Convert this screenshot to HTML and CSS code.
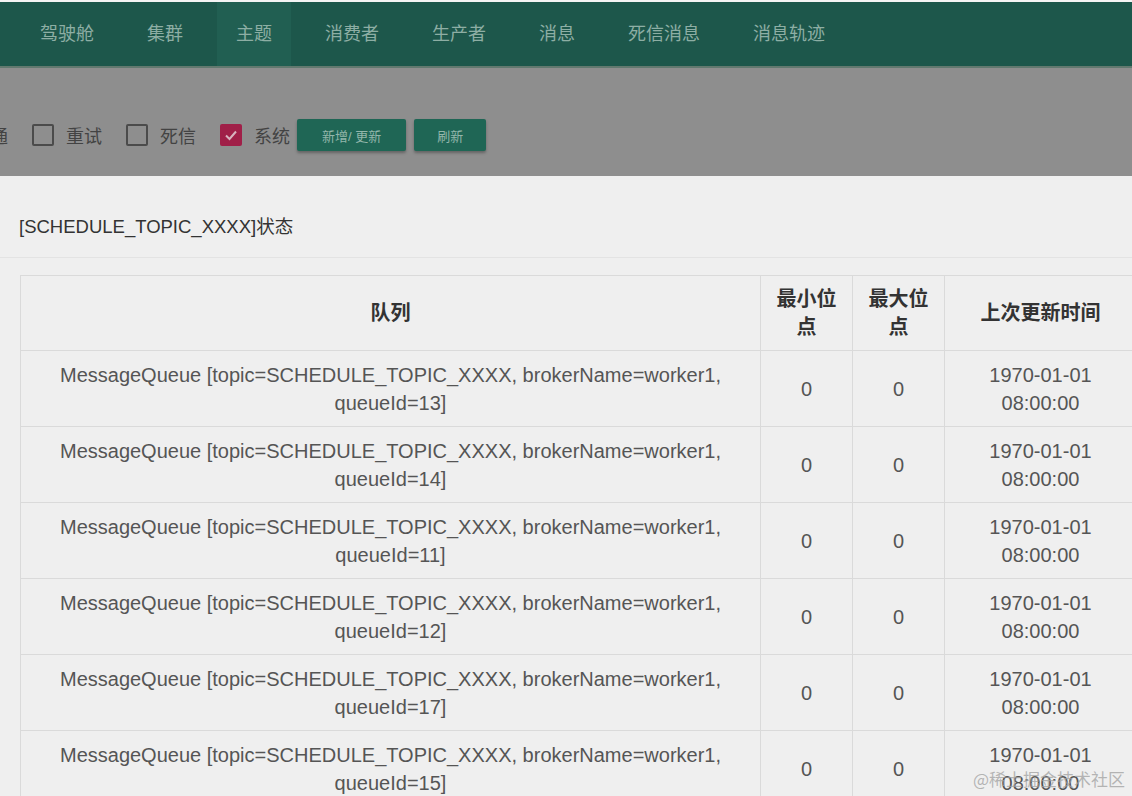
FILE: index.html
```html
<!DOCTYPE html>
<html lang="zh-CN">
<head>
    <meta charset="UTF-8">
    <meta name="viewport" content="width=device-width, initial-scale=1.0">
    <title>主题 - 队列状态</title>
    <link rel="stylesheet" href="styles.css">
</head>
<body>

    <nav class="navbar">
        <a class="nav-item" href="#">驾驶舱</a>
        <a class="nav-item" href="#">集群</a>
        <a class="nav-item active" href="#">主题</a>
        <a class="nav-item" href="#">消费者</a>
        <a class="nav-item" href="#">生产者</a>
        <a class="nav-item" href="#">消息</a>
        <a class="nav-item" href="#">死信消息</a>
        <a class="nav-item" href="#">消息轨迹</a>
    </nav>

    <div class="backdrop">
        <div class="filter-row">
            <label class="check"><span class="box"></span>普通</label>
            <label class="check"><span class="box"></span>重试</label>
            <label class="check"><span class="box"></span>死信</label>
            <label class="check check-last">
                <span class="box checked">
                    <svg width="16" height="16" viewBox="0 0 16 16"><polyline points="3,8.5 6.5,12 13,4.5" fill="none" stroke="#d8b3bf" stroke-width="2"/></svg>
                </span>系统
            </label>
            <button class="btn" type="button">新增/ 更新</button>
            <button class="btn btn-small" type="button">刷新</button>
        </div>
    </div>

    <div class="panel">
        <div class="panel-title">[SCHEDULE_TOPIC_XXXX]状态</div>
        <div class="panel-divider"></div>

        <table class="queue-table">
            <colgroup>
                <col class="col-queue">
                <col class="col-offset">
                <col class="col-offset">
                <col class="col-time">
            </colgroup>
            <thead>
                <tr>
                    <th>队列</th>
                    <th>最小位点</th>
                    <th>最大位点</th>
                    <th>上次更新时间</th>
                </tr>
            </thead>
            <tbody>
                <tr>
                    <td>MessageQueue [topic=SCHEDULE_TOPIC_XXXX, brokerName=worker1, queueId=13]</td>
                    <td>0</td>
                    <td>0</td>
                    <td>1970-01-01 08:00:00</td>
                </tr>
                <tr>
                    <td>MessageQueue [topic=SCHEDULE_TOPIC_XXXX, brokerName=worker1, queueId=14]</td>
                    <td>0</td>
                    <td>0</td>
                    <td>1970-01-01 08:00:00</td>
                </tr>
                <tr>
                    <td>MessageQueue [topic=SCHEDULE_TOPIC_XXXX, brokerName=worker1, queueId=11]</td>
                    <td>0</td>
                    <td>0</td>
                    <td>1970-01-01 08:00:00</td>
                </tr>
                <tr>
                    <td>MessageQueue [topic=SCHEDULE_TOPIC_XXXX, brokerName=worker1, queueId=12]</td>
                    <td>0</td>
                    <td>0</td>
                    <td>1970-01-01 08:00:00</td>
                </tr>
                <tr>
                    <td>MessageQueue [topic=SCHEDULE_TOPIC_XXXX, brokerName=worker1, queueId=17]</td>
                    <td>0</td>
                    <td>0</td>
                    <td>1970-01-01 08:00:00</td>
                </tr>
                <tr>
                    <td>MessageQueue [topic=SCHEDULE_TOPIC_XXXX, brokerName=worker1, queueId=15]</td>
                    <td>0</td>
                    <td>0</td>
                    <td>1970-01-01 08:00:00</td>
                </tr>
            </tbody>
        </table>
    </div>

    <div class="watermark">@稀土掘金技术社区</div>

</body>
</html>
```

FILE: styles.css
```css
html, body {
    margin: 0;
    height: 796px;
    overflow: hidden;
}

body {
    position: relative;
    background-color: #efefef;
    border-top: 2px solid #f4f4f4;
    box-sizing: border-box;
    font-family: "Liberation Sans", "Noto Sans CJK SC", sans-serif;
    color: #555;
}

.navbar {
    display: flex;
    height: 64px;
    padding-left: 21px;
    background-color: #1d574b;
}

.nav-item {
    display: flex;
    align-items: center;
    padding: 0 19px 5px;
    margin-right: 15px;
    font-size: 18px;
    color: #8daea4;
    text-decoration: none;
}

.nav-item.active {
    background-color: #215f52;
}

.backdrop {
    height: 108px;
    border-top: 2px solid #62796f;
    background-color: #8e8e8e;
}

.filter-row {
    display: flex;
    align-items: center;
    height: 32px;
    padding-top: 51px;
    margin-left: -62px;
}

.check {
    display: flex;
    align-items: center;
    gap: 12px;
    margin-right: 24px;
    font-size: 18px;
    color: #434343;
}

.check-last {
    margin-right: 7px;
}

.box {
    display: flex;
    align-items: center;
    justify-content: center;
    width: 18px;
    height: 18px;
    border: 2px solid #4b4b4b;
    border-radius: 2px;
}

.box.checked {
    width: 22px;
    height: 22px;
    border: 0;
    background-color: #a01f48;
}

.btn {
    height: 32px;
    padding: 0 25px;
    margin-right: 8px;
    border: 0;
    border-radius: 2px;
    background-color: #1f6655;
    color: #93b6ab;
    font-family: inherit;
    font-size: 13px;
    box-shadow: 0 2px 3px rgba(0, 0, 0, 0.3);
}

.btn-small {
    padding: 0 23px;
}

.panel-title {
    padding: 37px 0 0 19px;
    font-size: 18.5px;
    line-height: 28px;
    color: #333;
}

.panel-divider {
    height: 1px;
    margin: 16px 0 17px;
    background-color: #e3e3e3;
}

.queue-table {
    width: 1116px;
    margin-left: 20px;
    border-collapse: collapse;
    table-layout: fixed;
    font-size: 20px;
    line-height: 28px;
}

.col-queue { width: 740px; }
.col-offset { width: 92px; }
.col-time { width: 192px; }

.queue-table th,
.queue-table td {
    padding: 10px 16px 9px;
    border: 1px solid #dadada;
    text-align: center;
    vertical-align: middle;
}

.queue-table th {
    padding: 9px 14px;
    font-weight: bold;
    color: #333;
}

.watermark {
    position: absolute;
    right: 7px;
    bottom: 5px;
    font-size: 17px;
    color: rgba(160, 160, 160, 0.75);
    font-family: "Noto Sans CJK SC", sans-serif;
}
```
